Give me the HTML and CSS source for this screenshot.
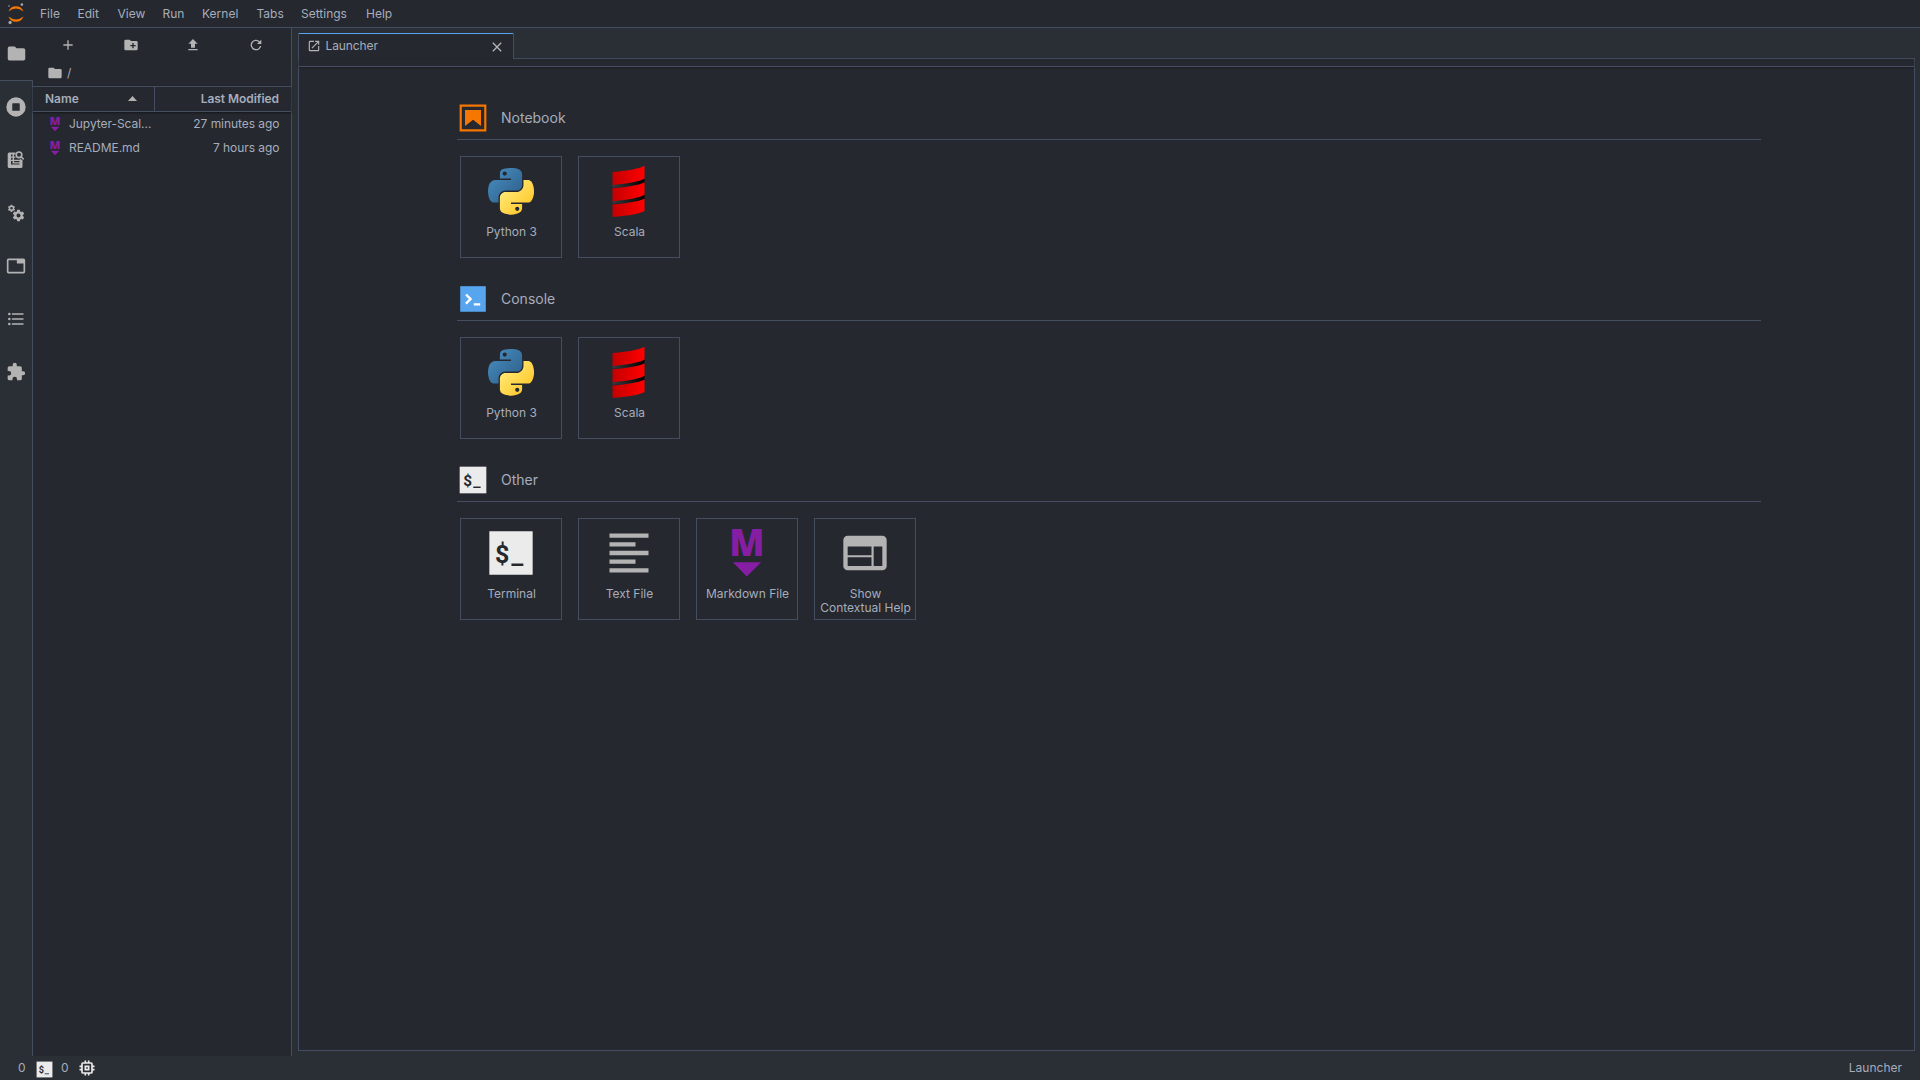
FILE: index.html
```html
<!DOCTYPE html>
<html lang="en">
<head>
<meta charset="utf-8">
<title>JupyterLab</title>
<link rel="stylesheet" href="styles.css">
</head>
<body>
<svg class="defs" aria-hidden="true">
  <defs>
    <linearGradient id="py-blue" x1="0" y1="0" x2="1" y2="1"><stop offset="0" stop-color="#4a90c4"/><stop offset="1" stop-color="#2b5b84"/></linearGradient>
    <linearGradient id="py-yellow" x1="0" y1="0" x2="1" y2="1"><stop offset=".2" stop-color="#ffe873"/><stop offset=".8" stop-color="#ffc92f"/></linearGradient>
    <linearGradient id="sc-red" x1="0" x2="1"><stop offset="0" stop-color="#c40000"/><stop offset="1" stop-color="#ff0000"/></linearGradient>
    <linearGradient id="sc-dark" x1="0" x2="1"><stop offset="0" stop-color="#3a3a3e"/><stop offset="1" stop-color="#000"/></linearGradient>
    <symbol id="folder" viewBox="0 0 24 24"><path d="M10 4H4a2 2 0 0 0-2 2v12a2 2 0 0 0 2 2h16a2 2 0 0 0 2-2V8a2 2 0 0 0-2-2h-8z"/></symbol>
    <symbol id="gear" viewBox="0 0 24 24"><path fill-rule="evenodd" d="M19.430 12.980c.04-.32.07-.64.07-.98s-.03-.66-.07-.98l2.110-1.650c.19-.15.24-.42.12-.64l-2-3.460c-.12-.22-.39-.3-.61-.22l-2.490 1c-.52-.4-1.080-.73-1.690-.98l-.38-2.650C14.460 2.180 14.250 2 14 2h-4c-.25 0-.46.18-.49.42l-.38 2.650c-.61.25-1.170.59-1.690.98l-2.490-1c-.23-.09-.49 0-.61.22l-2 3.460c-.13.22-.07.49.12.64l2.110 1.650c-.04.32-.07.65-.07.98s.03.66.07.98l-2.110 1.650c-.19.15-.24.42-.12.64l2 3.460c.12.22.39.3.61.22l2.490-1c.52.4 1.080.73 1.690.98l.38 2.650c.03.24.24.42.49.42h4c.25 0 .46-.18.49-.42l.38-2.650c.61-.25 1.170-.59 1.690-.98l2.490 1c.23.09.49 0 .61-.22l2-3.460c.12-.22.07-.49-.12-.64l-2.110-1.650zM12 15.500a3.500 3.500 0 1 1 0-7 3.500 3.500 0 0 1 0 7z"/></symbol>
    <symbol id="markdown" viewBox="0 0 22 22"><path fill="#851ea3" d="M5 14.900h12l-6.100 6z"/><text x="10.950" y="12.400" class="md-letter">M</text></symbol>
    <symbol id="terminal" viewBox="0 0 24 24"><path fill="#ebebeb" d="M2 2h20v20H2z"/><text x="7.900" y="16.600" class="dollar">$</text><path fill="#25292f" d="M12.200 16.900h5.500v1.100h-5.500z"/></symbol>
    <symbol id="python" viewBox="0 0 111 113"><path fill="url(#py-blue)" d="M54.900 0C50.300 0 46 .4 42.100 1.100 30.800 3.100 28.700 7.300 28.700 15v10.300h26.800v3.400H18.600c-7.800 0-14.600 4.600-16.700 13.500-2.500 10.300-2.600 16.600 0 27.300 1.900 7.900 6.400 13.600 14.200 13.600h9.300V70.900c0-8.900 7.600-16.700 16.700-16.700h26.800c7.500 0 13.400-6.100 13.400-13.600V15c0-7.200-6.100-12.700-13.400-13.900C64.300.3 59.500 0 54.900 0zM40.400 8.200a5.100 5.100 0 1 1 0 10.200 5.100 5.100 0 0 1 0-10.200z"/><path fill="url(#py-yellow)" d="M85.600 28.700v11.900c0 9.200-7.800 17-16.700 17H42.100c-7.300 0-13.400 6.200-13.400 13.600v25.500c0 7.300 6.300 11.500 13.400 13.600 8.500 2.500 16.600 3 26.800 0 6.700-2 13.400-5.900 13.400-13.600V86.500H55.500v-3.400h40.200c7.800 0 10.700-5.400 13.400-13.600 2.800-8.400 2.700-16.500 0-27.300-1.900-7.700-5.600-13.500-13.400-13.500zM70.600 93.300a5.100 5.100 0 1 1 0 10.200 5.100 5.100 0 0 1 0-10.200z"/></symbol>
    <symbol id="scala" viewBox="0 0 33 52"><path fill="url(#sc-dark)" d="M.5 22.500V19.500Q26 17.500 32.500 13.500v5Q26 21 .5 22.500zM.5 38.500V35.500Q26 33.500 32.500 29.500v5Q26 37 .5 38.500z"/><path fill="url(#sc-red)" d="M.5 7Q25 5 32.500.8V13.500Q26 17.500.5 20zM.5 23.200Q25 21.200 32.500 17.200V29.700Q26 33.700.5 36.200zM.5 39.400Q25 37.400 32.500 33.400V45.900Q26 49.900.5 51.800z"/></symbol>
  </defs>
</svg>
<header class="menubar">
  <svg class="logo" viewBox="0 0 18 22"><path fill="#f57600" d="M1.500 8.500A8 8 0 0 1 16.500 8.500Q9 2.700 1.500 8.500zM1.500 13.500A8 8 0 0 0 16.500 13.500Q9 19.300 1.500 13.500z"/><g fill="#a8a8a8"><circle cx="14.900" cy="1.600" r="1.300"/><circle cx="2" cy="3" r=".8"/><circle cx="3.100" cy="19.500" r="1.650"/></g></svg>
  <nav class="menus"><span class="m-file">File</span><span class="m-edit">Edit</span><span class="m-view">View</span><span class="m-run">Run</span><span class="m-kernel">Kernel</span><span class="m-tabs">Tabs</span><span class="m-settings">Settings</span><span>Help</span></nav>
</header>
<div class="workspace">
  <aside class="activity">
    <div class="act active"><svg class="i21" viewBox="0 0 24 24"><use href="#folder"/></svg></div>
    <div class="act"><svg class="i20" viewBox="0 0 512 512"><path d="M256 8a248 248 0 1 0 0 496 248 248 0 0 0 0-496zm96 328a16 16 0 0 1-16 16H176a16 16 0 0 1-16-16V176a16 16 0 0 1 16-16h160a16 16 0 0 1 16 16z"/></svg></div>
    <div class="act"><svg class="i20" viewBox="0 0 20 20"><path fill-rule="evenodd" d="M3.200 2.500H9.500V4.500H8v2h1.500v1.200H8v2h6v-.9l2.500 1.500V16.500a1.500 1.500 0 0 1-1.500 1.500H3.200A1.500 1.500 0 0 1 1.700 16.500V4a1.500 1.500 0 0 1 1.500-1.500zM5 4.500v2h1.600v-2zm0 3.200v2h1.600v-2zm0 3.300v3.600h8.500v-1.100H6.600V11zm3 0v1.200h5.500V11z"/><circle cx="13" cy="4.800" r="2.800" fill="none" stroke="#b3b3b3" stroke-width="1.600"/><path d="M14.300 7l1.100-1.100 2.900 2.900-1.100 1.100z"/></svg></div>
    <div class="act"><svg class="i20" viewBox="0 0 20 20"><use href="#gear" x="1.200" y="1" width="8.600" height="8.600"/><use href="#gear" x="5.600" y="5.600" width="13.800" height="13.800"/></svg></div>
    <div class="act"><svg class="i20" viewBox="0 0 24 24"><path d="M21 3H3a2 2 0 0 0-2 2v14a2 2 0 0 0 2 2h18a2 2 0 0 0 2-2V5a2 2 0 0 0-2-2zm0 16H3V5h10v4h8z"/></svg></div>
    <div class="act"><svg class="i20" viewBox="0 0 24 24"><path d="M7 5h14v2H7zM7 11h14v2H7zM7 17h14v2H7z"/><circle cx="4" cy="6" r="1.500"/><circle cx="4" cy="12" r="1.500"/><circle cx="4" cy="18" r="1.500"/></svg></div>
    <div class="act"><svg class="i20" viewBox="0 0 24 24"><path d="M20.500 11H19V7a2 2 0 0 0-2-2h-4V3.500a2.500 2.500 0 0 0-5 0V5H4a2 2 0 0 0-2 2v3.800h1.500a2.700 2.700 0 0 1 0 5.400H2V20a2 2 0 0 0 2 2h3.800v-1.500a2.700 2.700 0 0 1 5.400 0V22H17a2 2 0 0 0 2-2v-4h1.500a2.500 2.500 0 0 0 0-5z"/></svg></div>
    <div class="rest"></div>
  </aside>
  <section class="browser">
    <div class="tools">
      <svg class="i16" viewBox="0 0 24 24"><path d="M19 13h-6v6h-2v-6H5v-2h6V5h2v6h6z"/></svg>
      <svg class="i16" viewBox="0 0 24 24"><path d="M20 6h-8l-2-2H4a2 2 0 0 0-2 2v12a2 2 0 0 0 2 2h16a2 2 0 0 0 2-2V8a2 2 0 0 0-2-2zm-1 8h-3v3h-2v-3h-3v-2h3V9h2v3h3z"/></svg>
      <svg class="i16" viewBox="0 0 24 24"><path d="M9 16h6v-6h4l-7-7-7 7h4zm-4 2h14v2H5z"/></svg>
      <svg class="i16" viewBox="0 0 18 18"><path d="M9 13.500a4.500 4.500 0 1 1 3.170-7.670L10 8h5V3l-1.760 1.760A6 6 0 1 0 14.900 10h-1.520A4.500 4.500 0 0 1 9 13.500z"/></svg>
    </div>
    <div class="crumbs"><svg class="i16" viewBox="0 0 24 24"><use href="#folder"/></svg><span>/</span></div>
    <div class="listhead"><div class="col-name"><span>Name</span><svg class="caret" viewBox="0 0 9 5"><path d="M0 5L4.500 0 9 5z"/></svg></div><div class="col-mod">Last Modified</div></div>
    <div class="files">
      <div class="file"><svg class="i16"><use href="#markdown"/></svg><span class="fname">Jupyter-Scal...</span><span>27 minutes ago</span></div>
      <div class="file"><svg class="i16"><use href="#markdown"/></svg><span class="fname">README.md</span><span>7 hours ago</span></div>
    </div>
  </section>
  <main class="dock">
    <div class="tabbar">
      <div class="tab"><svg class="i14" viewBox="0 0 24 24"><path d="M19 19H5V5h7V3H5a2 2 0 0 0-2 2v14a2 2 0 0 0 2 2h14a2 2 0 0 0 2-2v-7h-2zM14 3v2h3.590l-9.830 9.830 1.410 1.410L19 6.410V10h2V3z"/></svg><span>Launcher</span><svg class="close" viewBox="0 0 24 24"><path d="M19 6.410L17.590 5 12 10.590 6.410 5 5 6.410 10.590 12 5 17.590 6.410 19 12 13.410 17.590 19 19 17.590 13.410 12z"/></svg></div>
      <div class="tabfill"></div>
    </div>
    <div class="panel">
      <div class="toolbar"></div>
      <div class="launcher">
        <section class="group">
          <h2><svg class="i32" viewBox="0 0 22 22"><path fill="#f57600" fill-rule="evenodd" d="M1.800 1.800h18.400v18.400H1.800zM3.300 3.300v15.400h15.400V3.300zM16.500 16.500l-5.400-4.300-5.600 4.300v-11h11z"/></svg><span>Notebook</span></h2>
          <div class="cards">
            <div class="card"><div class="pic"><svg class="py"><use href="#python"/></svg></div><p>Python 3</p></div>
            <div class="card"><div class="pic"><svg class="sc"><use href="#scala"/></svg></div><p>Scala</p></div>
          </div>
        </section>
        <section class="group">
          <h2><svg class="i32" viewBox="0 0 200 200"><path fill="#56a5ee" d="M20 19.800h160v160H20z"/><path fill="#fff" d="M105 127.300h40v12.800h-40zM51.100 77L74 99.900l-23.300 23.300 10.500 10.500L95 99.900 61.600 66.500z"/></svg><span>Console</span></h2>
          <div class="cards">
            <div class="card"><div class="pic"><svg class="py"><use href="#python"/></svg></div><p>Python 3</p></div>
            <div class="card"><div class="pic"><svg class="sc"><use href="#scala"/></svg></div><p>Scala</p></div>
          </div>
        </section>
        <section class="group">
          <h2><svg class="i32"><use href="#terminal"/></svg><span>Other</span></h2>
          <div class="cards">
            <div class="card"><div class="pic"><svg class="i52"><use href="#terminal"/></svg></div><p>Terminal</p></div>
            <div class="card"><div class="pic"><svg class="i52" viewBox="0 0 24 24"><path d="M15 15H3v2h12zM15 7H3v2h12zM3 13h18v-2H3zM3 21h18v-2H3zM3 3v2h18V3z"/></svg></div><p>Text File</p></div>
            <div class="card"><div class="pic"><svg class="i52"><use href="#markdown"/></svg></div><p>Markdown File</p></div>
            <div class="card"><div class="pic"><svg class="i52" viewBox="0 0 24 24"><path d="M20 4H4a2 2 0 0 0-2 2v12a2 2 0 0 0 2 2h16a2 2 0 0 0 2-2V6a2 2 0 0 0-2-2zm-5 14H4v-4h11zm0-5H4V9h11zm5 5h-4V9h4z"/></svg></div><p>Show<br>Contextual Help</p></div>
          </div>
        </section>
      </div>
    </div>
  </main>
</div>
<footer class="status"><span>0</span><svg class="st"><use href="#terminal"/></svg><span>0</span><svg class="chip" viewBox="0 0 24 24"><path fill-rule="evenodd" d="M15 9H9v6h6zm-2 4h-2v-2h2zm8-2V9h-2V7a2 2 0 0 0-2-2h-2V3h-2v2h-2V3H9v2H7a2 2 0 0 0-2 2v2H3v2h2v2H3v2h2v2a2 2 0 0 0 2 2h2v2h2v-2h2v2h2v-2h2a2 2 0 0 0 2-2v-2h2v-2h-2v-2zm-4 6H7V7h10z"/></svg><span class="current">Launcher</span></footer>
</body>
</html>
```
FILE: styles.css
```css
:root {
  --bg: #25282f;
  --side: #2a2e35;
  --line: #454d61;
  --text: #a6adbc;
  --icon: #b3b3b3;
}
* { box-sizing: border-box; }
body {
  margin: 0;
  height: 1080px;
  display: flex;
  flex-direction: column;
  overflow: hidden;
  background: var(--side);
  color: var(--text);
  font: 12px/16px Inter, "Liberation Sans", sans-serif;
}
svg { display: block; flex: none; fill: var(--icon); }
.defs { position: absolute; width: 0; height: 0; }
.md-letter { font: 800 15.4px "Open Sans", sans-serif; fill: #851ea3; text-anchor: middle; }
.dollar { font: 700 11.5px Roboto, sans-serif; fill: #25292f; text-anchor: middle; }
.i14 { width: 14px; height: 14px; }
.i16 { width: 16px; height: 16px; }
.i20 { width: 20px; height: 20px; }
.i21 { width: 21px; height: 21px; }
.i32 { width: 32px; height: 32px; }
.i52 { width: 52px; height: 52px; }

.menubar {
  flex: none;
  height: 28px;
  display: flex;
  background: var(--bg);
  border-bottom: 1px solid var(--line);
}
.logo { width: 18px; height: 22px; margin: 3px 15px 0 7px; }
.menus { display: flex; padding-top: 6px; }
.m-file { width: 37.500px; }
.m-edit { width: 40px; }
.m-view { width: 45px; }
.m-run { width: 39.500px; }
.m-kernel { width: 54.500px; }
.m-tabs { width: 44.500px; }
.m-settings { width: 65px; }

.workspace { flex: 1; display: flex; min-height: 0; }
.activity { width: 33px; display: flex; flex-direction: column; }
.act {
  height: 53px;
  flex: none;
  display: flex;
  align-items: center;
  padding: 0 0 2px 6px;
  border-right: 1px solid var(--line);
}
.act.active { padding-left: 5.500px; padding-bottom: 1px; background: var(--bg); border-right: 0; border-bottom: 1px solid var(--line); }
.rest { flex: 1; border-right: 1px solid var(--line); }
.browser { width: 259px; background: var(--bg); border-right: 1px solid var(--line); }
.tools { display: flex; justify-content: space-around; padding: 9px 4px 0; }
.crumbs { display: flex; align-items: center; gap: 4px; margin: 12px 0 0 14px; height: 16px; }
.listhead {
  display: flex;
  height: 26px;
  margin-top: 5px;
  border: solid var(--line);
  border-width: 1px 0;
  box-shadow: 0 1px 2px #15171b;
  font-weight: 600;
  line-height: 23px;
  letter-spacing: -0.05px;
}
.col-name {
  width: 122px;
  display: flex;
  align-items: center;
  justify-content: space-between;
  padding: 0 17px 1px 12px;
  border-right: 1px solid var(--line);
}
.caret { width: 9px; height: 5px; }
.col-mod { flex: 1; text-align: right; padding-right: 12px; }
.file { display: flex; align-items: center; height: 24px; padding: 0 11.500px 0 14px; letter-spacing: -0.05px; }
.fname { flex: 1; padding-left: 6px; }

.dock { flex: 1; display: flex; flex-direction: column; padding: 5px 5px 5px 6px; }
.tabbar { display: flex; height: 26px; }
.tab {
  width: 216px;
  height: 26px;
  display: flex;
  align-items: center;
  padding: 0 9px 1px 8px;
  gap: 4.500px;
  background: var(--bg);
  border: solid var(--line);
  border-width: 0 1px;
  box-shadow: inset 0 1px #56a5ee;
  letter-spacing: -0.1px;
}
.close { width: 16px; height: 16px; margin: 2px -1px 0 auto; }
.tabfill { flex: 1; border-bottom: 1px solid var(--line); }
.panel { flex: 1; background: var(--bg); border: solid var(--line); border-width: 0 1px 1px; }
.toolbar { height: 8px; border-bottom: 1px solid var(--line); box-shadow: 0 1px 2px #1c1f24; }
.launcher { padding: 34px 153px 0 158px; }
.group { height: 181px; }
.group h2 {
  display: flex;
  align-items: center;
  gap: 12px;
  height: 39px;
  margin: 0 0 16px;
  padding-bottom: 4px;
  border-bottom: 1px solid var(--line);
  font-size: 14px;
  font-weight: 400;
}
.cards { display: flex; gap: 16px; padding-left: 3px; }
.card { width: 102px; height: 102px; border: 1px solid var(--line); }
.pic { height: 68px; display: flex; align-items: center; justify-content: center; }
.py { width: 46px; height: 47px; margin-right: 1px; }
.sc { width: 33px; height: 52px; margin-right: 1px; }
.card p { margin: 0 -6px 0 -5px; line-height: 14px; text-align: center; }

.status { flex: none; height: 24px; display: flex; align-items: center; padding: 0 18px 0 18px; }
.st { width: 19px; height: 19px; margin: 2px 7px 0 9.500px; }
.chip { width: 20px; height: 20px; margin-left: 8px; fill: #ebebeb; }
.current { margin-left: auto; }
```
